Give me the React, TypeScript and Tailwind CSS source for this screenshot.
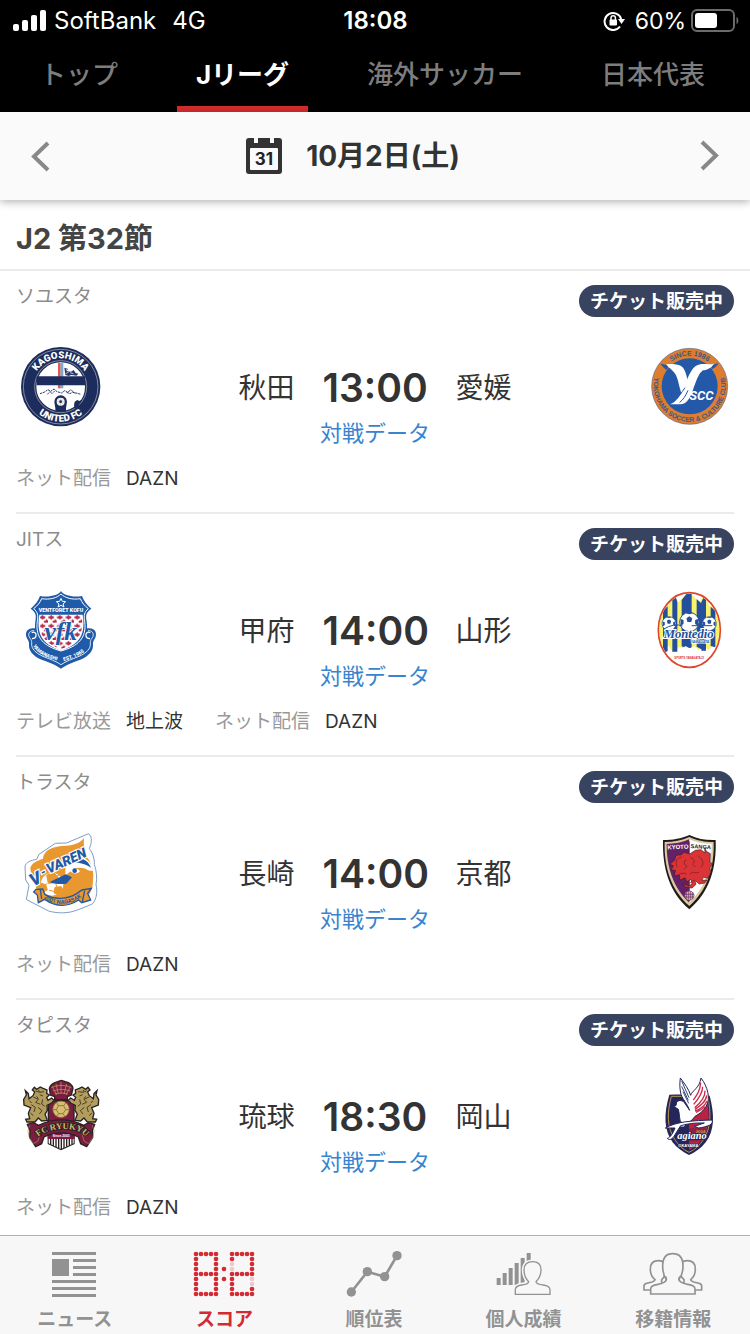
import type { ReactNode } from 'react'

type Match = {
  venue: string
  home: string
  away: string
  time: string
  homeLogo: ReactNode
  awayLogo: ReactNode
  media: { label: string; value: string }[]
}

const CREST = 'h-20 w-20 overflow-visible'
const LATIN = 'Liberation Sans, sans-serif'

function Kagoshima() {
  return (
    <svg viewBox="30 36 240 240" className={CREST} role="img" aria-label="秋田">
      <circle cx="152" cy="155" r="119" fill="#1c2c5c" />
      <circle cx="152" cy="155" r="112" fill="none" stroke="#b9b9b6" strokeWidth="2" />
      <circle cx="152" cy="155" r="75" fill="#fff" stroke="#1c2c5c" strokeWidth="4" />
      <circle cx="152" cy="155" r="78" fill="none" stroke="#b9b9b6" strokeWidth="2" />
      <path d="M144 84h8v76h-8z" fill="#df5a4c" />
      <path d="M152 84h8v76h-8z" fill="#79a9d8" />
      <path d="M163 98l12 4-6 6 14 2 8-5 6 9 8 2-5 6-16-2-8 3-10-3z" fill="#2c3b6b" />
      <path d="M168 103l8 4M180 113l10 3M167 116l9-5" stroke="#fff" strokeWidth="2" />
      <path d="M80 124h145v27H80z" fill="#1c2c5c" />
      <path d="M90 176l14-5 10-7 8 5 10-7 9 8 14 4 9-7 9 5 10-8 8 8 22 6M112 178l8-8 6 6 8-8M170 172l10 4 8-5 8 5" fill="none" stroke="#2c3b6b" strokeWidth="3" strokeDasharray="7 2" />
      <path d="M133 200a19 19 0 1 1 38 0l-3 20v10h-32v-10z" fill="#1c2c5c" />
      <circle cx="152" cy="200" r="12" fill="#f5f5f3" />
      <path d="M152 190v20M142 200h20M145 193l14 14M159 193l-14 14" stroke="#b9b9b6" strokeWidth="2" />
      <circle cx="152" cy="200" r="4" fill="#1c2c5c" />
      <path d="M194 200l8-5 6 3 7-4-9 19-11 10-3-12z" fill="#1c2c5c" />
      <path id="kagoshima-top" d="M67 155a85 85 0 0 1 170 0" fill="none" />
      <path id="kagoshima-bottom" d="M47 155a105 105 0 0 0 210 0" fill="none" />
      <g fill="#fff" fontFamily="Roboto, sans-serif" fontWeight="900" fontSize="29" textAnchor="middle">
        <text><textPath href="#kagoshima-top" startOffset="50%">KAGOSHIMA</textPath></text>
        <text><textPath href="#kagoshima-bottom" startOffset="50%">UNITED FC</textPath></text>
      </g>
    </svg>
  )
}

function Yscc() {
  return (
    <svg viewBox="30 36 240 240" className={CREST} role="img" aria-label="愛媛">
      <circle cx="149" cy="154" r="114" fill="#de7d2e" stroke="#5c6a8c" strokeWidth="2" />
      <circle cx="149" cy="154" r="84" fill="#2459a9" />
      <path d="M62 86l23 5-3 14c-9-4-15-10-20-19zM236 84l-23 7 2 12c9-4 16-10 21-19z" fill="#2459a9" />
      <path d="M78 88c18-2 38-2 49 8 11 11 14 34 20 56l-20 30c-9-20-11-45-19-61-6-13-17-18-30-33z" fill="#fff" />
      <path d="M222 86c-9 14-20 18-33 20-14 9-22 37-31 61-8 23-18 40-37 41H90c20-9 33-29 43-53 9-22 17-48 33-61 17-13 36-3 56-8z" fill="#fff" />
      <path d="M135 158c-10 14-22 34-35 43M144 166c-7 16-14 28-25 36" stroke="#2459a9" strokeWidth="3" fill="none" />
      <text x="148" y="196" fill="#fff" fontFamily="Roboto, sans-serif" fontWeight="700" fontStyle="italic" fontSize="39">SCC</text>
      <path id="yscc-top" d="M57 154a92 92 0 0 1 184 0" fill="none" />
      <path id="yscc-bottom" d="M61 90A108 108 0 1 0 237 90" fill="none" />
      <g fill="#39578c" fontFamily={LATIN} fontWeight="700" textAnchor="middle">
        <text fontSize="21"><textPath href="#yscc-top" startOffset="50%">SINCE 1986</textPath></text>
        <text fontSize="20"><textPath href="#yscc-bottom" startOffset="50%">YOKOHAMA SOCCER &amp; CULTURE CLUB</textPath></text>
      </g>
    </svg>
  )
}

function Kofu() {
  return (
    <svg viewBox="30 30 240 240" className={CREST} role="img" aria-label="甲府">
      <defs>
        <pattern id="kofu-check" x="88" y="102" width="26" height="26" patternUnits="userSpaceOnUse">
          <path d="M1 7h5l3-5 5 5h4v6h-4l-4 4-5-4H1zM14 20h4l4-5 4 5v6h-4l-4 3-4-3z" fill="#b5274b" />
        </pattern>
      </defs>
      <path d="M70 145c-17-1-25 11-21 25 3 10 9 11 8 24-1 15 9 33 38 45 24 9 40 14 58 27 18-13 34-18 58-27 29-12 39-30 38-45-1-13 5-14 8-24 4-14-4-26-21-25z" fill="#205ba9" />
      <path d="M72 152c-12-1-18 8-15 17 3 8 9 9 8 23-1 13 11 27 34 37 22 9 38 14 54 25 16-11 32-16 54-25 23-10 35-24 34-37-1-14 5-15 8-23 3-9-3-18-15-17" fill="none" stroke="#dbe6f2" strokeWidth="3" />
      <path d="M153 33c7 12 34 20 63 15 5 14 13 25 28 38-14 10-18 18-14 38 8 56-22 82-77 97-55-15-84-41-77-97 4-20 0-28-14-38 15-13 23-24 28-38 29 5 56-3 63-15z" fill="#205ba9" />
      <path d="M153 42c12 12 34 18 58 14 5 12 12 21 24 30-12 10-14 20-11 38 7 51-21 75-71 89-50-14-78-38-71-89 3-18 1-28-11-38 12-9 19-18 24-30 24 4 46-2 58-14z" fill="none" stroke="#fff" strokeWidth="3" />
      <path d="M88 104h130c9 57-7 88-65 108-58-20-74-51-65-108z" fill="#fff" />
      <path d="M91 104h124c7 54-7 84-62 103-55-19-69-49-62-103z" fill="url(#kofu-check)" />
      <path d="M153 55l4 9 10 1-8 7 3 9-9-5-9 5 3-9-8-7 10-1z" fill="#205ba9" stroke="#fff" strokeWidth="3" />
      <path d="M65 158c8-4 15 1 13 10-1 6-6 8-12 8M241 158c-8-4-15 1-13 10 1 6 6 8 12 8" fill="none" stroke="#fff" strokeWidth="4" />
      <text x="153" y="96" textAnchor="middle" fill="#fff" fontFamily="Roboto, sans-serif" fontWeight="900" fontSize="16">VENTFORET KOFU</text>
      <text x="152" y="179" textAnchor="middle" fill="#205ba9" stroke="#fff" strokeWidth="4" paintOrder="stroke" fontFamily="Liberation Serif, serif" fontStyle="italic" fontWeight="700" fontSize="76">vfk</text>
      <path id="kofu-left" d="M69 197c10 22 35 34 77 46" fill="none" />
      <path id="kofu-right" d="M161 243c41-12 62-23 75-42" fill="none" />
      <g fill="#fff" fontFamily="Roboto, sans-serif" fontWeight="900" fontSize="15">
        <text><textPath href="#kofu-left">YAMANASHI</textPath></text>
        <text><textPath href="#kofu-right">EST. 1965</textPath></text>
      </g>
    </svg>
  )
}

function Ball({ x, y, r }: { x: number; y: number; r: number }) {
  return (
    <g transform={`translate(${x} ${y}) scale(${r})`}>
      <circle r="1" fill="#fff" stroke="#234f9c" strokeWidth="0.1" />
      <path d="M-.3-.4L0-.6.3-.4.2 0h-.4zM-.9-.3l.3.1 0 .4-.3.2zM.9-.3l-.3.1 0 .4.3.2zM-.4-.9L0-.8.4-.9 0-1z" fill="#234f9c" />
    </g>
  )
}

function Yamagata() {
  return (
    <svg viewBox="30 30 240 240" className={CREST} role="img" aria-label="山形">
      <clipPath id="yamagata-oval"><ellipse cx="148" cy="150" rx="90" ry="109" /></clipPath>
      <ellipse cx="148" cy="150" rx="94" ry="113" fill="#fff" />
      <g clipPath="url(#yamagata-oval)">
        <path d="M58 105l14-18 14-13 15-32 14 26 14-17 17-17 17 17 15 17 14-26 14 32 16 13 18 18v102l-18-14-16 18-18-15-16 21-19-17-17 8-17-8-20 17-15-21-18 15-16-18-12 14z" fill="#f8f36b" />
        <path d="M69 92l14-13v134l-14 8zM97 51l7-10 8 24v150H97zM125 60l16-20h14v165h-14l-16-6zM170 57l14 13v138l-14-8zM184 66l12-24 2 10v160h-14zM212 80l14 12v110l-14-4z" fill="#234f9c" />
      </g>
      <ellipse cx="148" cy="150" rx="93" ry="112" fill="none" stroke="#dd482d" strokeWidth="5" />
      <Ball x={87} y={131} r={21} />
      <Ball x={208} y={131} r={21} />
      <Ball x={148} y={126} r={29} />
      <text x="146" y="174" textAnchor="middle" fill="#234f9c" stroke="#fff" strokeWidth="6" paintOrder="stroke" fontFamily="Liberation Serif, serif" fontStyle="italic" fontWeight="700" fontSize="38">Montedio</text>
      <path d="M70 148q32-20 58-10M155 137h62" fill="none" stroke="#234f9c" strokeWidth="3" />
      <text x="180" y="188" textAnchor="middle" fill="#234f9c" stroke="#fff" strokeWidth="3" paintOrder="stroke" fontFamily={LATIN} fontWeight="700" fontStyle="italic" fontSize="10">YAMAGATA</text>
      <path d="M102 225l20-13 14-14 13 7 14-7 16 16 18 11v16h-95z" fill="#fff" />
      <text x="148" y="238" textAnchor="middle" fill="#d62c2c" fontFamily={LATIN} fontWeight="700" fontSize="8">SPORTS YAMAGATA 21</text>
    </svg>
  )
}

function Nagasaki() {
  return (
    <svg viewBox="30 33 240 240" className={CREST} role="img" aria-label="長崎">
      <path d="M236 35c12 11 9 28 2 45 10 13 16 30 15 47 7 22 9 42 5 61 5 20 2 43-10 57-21 10-37 16-58 23-25 7-54 5-74-1l-47-24-20-11 8-42-10-16-2-41c4-14 18-18 35-21l7-15 49-33 33-1z" fill="#fff" stroke="#7c9dca" strokeWidth="3" />
      <path d="M222 48c-17 23-49 23-74 25-29 4-47 16-49 37-19 6-35 14-38 28 2 18 4 33 14 46 4 24 14 42 37 52 33 13 78 9 107-10 24-17 34-46 30-77-4-20-11-34-18-43-2-16-12-25-9-58z" fill="#e9982f" />
      <path d="M166 116c35-19 77-13 84 31l-33-4c-17 0-20 9-51 20z" fill="#fff" />
      <path d="M168 119c28-20 64-13 75 18-17-13-42-18-75-18z" fill="#2458a3" />
      <circle cx="126" cy="187" r="36" fill="#fff" stroke="#e9982f" strokeWidth="4" />
      <path d="M110 160l19-9 15 13-7 18-22 2zM91 183l16 5 5 15-15 9zM135 196l19-2 5 12-13 13-14-6zM137 165l15-8M112 184l-9 7M137 184l4 12M117 205l15 3" fill="#e9982f" stroke="#e9982f" strokeWidth="3" />
      <path d="M160 181l10-24 21-16c26-10 48 1 56 22 6 32-7 61-25 69 0-31-20-45-62-51z" fill="#e9982f" />
      <path d="M119 180l48-23 19 9-17 19c-18 2-34 2-50-5z" fill="#2458a3" />
      <path d="M181 148c8-10 22-10 29 0-9 9-20 9-29 0z" fill="#fff" />
      <circle cx="194" cy="146" r="7" fill="#2458a3" />
      <path d="M78 202l20-1 7 17c27 15 66 15 95-3l16-11 28-5-11 15 9 20-27 8-9-8c-34 22-70 20-102-2l-19 10-3-23-11-9z" fill="#e9982f" stroke="#2458a3" strokeWidth="4" />
      <path d="M91 202l4 29M224 206l-7 34" stroke="#2458a3" strokeWidth="4" />
      <path id="nagasaki-ribbon" d="M101 227c29 25 75 26 114-2" fill="none" />
      <text fill="#2458a3" fontFamily="Roboto, sans-serif" fontWeight="700" fontSize="17"><textPath href="#nagasaki-ribbon">2001 NAGASAKI</textPath></text>
      <g fill="#2458a3" stroke="#fff" strokeWidth="7" paintOrder="stroke" fontFamily="Roboto, sans-serif" fontStyle="italic" fontWeight="900">
        <text x="70" y="194" fontSize="52" transform="rotate(-28 70 194)">V</text>
        <text x="98" y="164" fontSize="36" transform="rotate(-28 98 164)">-</text>
        <text x="116" y="155" fontSize="41" transform="rotate(-24 116 155)">VAREN</text>
      </g>
    </svg>
  )
}

function Kyoto() {
  return (
    <svg viewBox="30 33 240 240" className={CREST} role="img" aria-label="京都">
      <path d="M148 39c25 12 50 16 79 15 3 84-18 157-79 208C87 211 67 138 69 54c30 0 55-4 79-15z" fill="#211b1c" />
      <path d="M148 45c23 11 46 15 73 15 2 77-18 144-73 192-55-48-76-115-74-192 28 0 51-5 74-15z" fill="#d9caa1" />
      <path d="M148 52v190C99 196 80 136 80 66c24 0 47-5 68-14z" fill="#632168" />
      <path d="M148 52c20 9 42 14 67 14 0 70-18 130-67 176z" fill="#fff" />
      <path d="M148 58v180" stroke="#241d20" strokeWidth="2" />
      <text x="114" y="81" textAnchor="middle" fill="#fff" fontFamily={LATIN} fontSize="18" fontWeight="700" transform="rotate(-3 114 81)">KYOTO</text>
      <text x="182" y="80" textAnchor="middle" fill="#2b2226" fontFamily={LATIN} fontSize="17" fontWeight="700" transform="rotate(3 182 80)">SANGA</text>
      <path d="M149 96l-16-5-10 7-15 2-4 14-15 13 11 4-7 13 13 1-3 17 15-4 2 17 15-8 5 13 13-8 3 14-10 6-18-8 9 12 19 2 12-11-4-12 14 11 16-3 7-9-15 1 4-9 14 3 9-19-4-12 8-12-7-7 1-24-12-7-5-11 1 16-12-10-17 2z" fill="#dc3337" stroke="#3a2023" strokeWidth="2" />
      <path d="M125 105c-17 3-20 18-14 30M119 154c9 3 16-5 20 4M140 111c-11 8-8 18 1 22l-8 9M151 107c14 3 14 13 7 20l8 8M173 101c15 9 21 26 10 35M177 151c-12 5-21-6-27 6M135 174l13 10 15-10" fill="none" stroke="#6b2023" strokeWidth="2" />
      <circle cx="148" cy="221" r="14" fill="#d9caa1" stroke="#632168" strokeWidth="2" />
      <path d="M139 212v18M145 209v24M151 209v24M157 212v18M135 217h26M135 225h26" stroke="#632168" strokeWidth="2" />
    </svg>
  )
}

function Shisa() {
  return (
    <g>
      <path d="M73 67l7 6 11-7 8 4 12 5-1 10 8 5-8 7 4 9 11-7 7 7-7 8-14 7 1 15-7 12 7 18-17 2-10-9-10 12H51l-4-8 12-2-4-16 7-17-20-8-1-17 8-13-3-13 9 9 2 15 12-9 5-11-7-6z" fill="#b29d5d" stroke="#27231f" strokeWidth="4" />
      <path d="M77 78l12 4 13-2M89 89l10 4M70 96l15 7-8 9 14 6M64 119l12 8-4 14M84 127l12 10-8 10M98 103l-3 14 9 7M61 144l9 8M86 75l2 5M80 94l5 7M58 108l7 5" fill="none" stroke="#4a4027" strokeWidth="3" />
    </g>
  )
}

function Ryukyu() {
  return (
    <svg viewBox="30 33 240 240" className={CREST} role="img" aria-label="琉球">
      <path d="M113 105h81v132l-41 19-40-19z" fill="#27231f" />
      <path d="M117 109h73v80h-73z" fill="#7d1c42" />
      <path d="M116 220h75v15l-38 17-37-17z" fill="#fff" />
      <path d="M122 220v19M130 220v22M138 220v26M146 220v30M154 220v32M162 220v29M170 220v25M178 220v22M186 220v18" stroke="#27231f" strokeWidth="4" />
      <path d="M118 70c3-12 14-17 25-20l11-4 12 4c12 3 21 9 23 20l-5 20-12 5v9h-38v-9l-13-5z" fill="#7d1c42" stroke="#27231f" strokeWidth="4" />
      <path d="M124 68c20-9 40-9 60 0M129 78c17-6 34-6 51 0M135 87c11-4 25-4 38 0M138 57l7 30M153 50v36M170 57l-8 30M127 64l13 26M181 65l-13 25" fill="none" stroke="#c2a660" strokeWidth="2" />
      <Shisa />
      <g transform="matrix(-1 0 0 1 307 0)"><Shisa /></g>
      <circle cx="153" cy="133" r="25" fill="#d6bd72" stroke="#6f5929" strokeWidth="2" />
      <path d="M145 122h16l6 12-8 12h-13l-7-12zM145 122l-5-9M161 122l6-8M167 134h11M159 146l6 9M146 146l-6 8M139 134h-10" fill="none" stroke="#6f5929" strokeWidth="2" />
      <path d="M113 186h81v36h-81z" fill="#7d1c42" />
      <path d="M52 178l18-5 16 8c41-22 95-22 135 0l15-8 18 5-7 19 1 21-18 27-18-9-7-20c-34-16-70-16-103 0l-7 20-18 9-18-27 1-21z" fill="#7d1c42" stroke="#27231f" strokeWidth="4" />
      <path d="M59 181l-5 16 3 19 14 20 13-8 6-22M247 181l5 16-3 19-14 20-13-8-6-22" fill="none" stroke="#b58c59" strokeWidth="2" />
      <path id="ryukyu-name" d="M80 222c13-32 132-48 151 1" fill="none" />
      <text fill="#d6bd72" stroke="#27231f" strokeWidth="6" paintOrder="stroke" fontFamily="Liberation Serif, serif" fontWeight="700" fontSize="26" textAnchor="middle"><textPath href="#ryukyu-name" startOffset="50%">FC RYUKYU</textPath></text>
      <text x="153" y="215" fill="#fff" textAnchor="middle" fontFamily={LATIN} fontWeight="700" fontSize="10">Since.2003</text>
    </svg>
  )
}

function Okayama() {
  return (
    <svg viewBox="33 33 240 240" className={CREST} role="img" aria-label="岡山">
      <path d="M91 89c39-1 84-1 121 3 15 58 15 103-12 140-14 18-31 30-50 38-19-9-36-21-49-38-27-37-27-85-10-143z" fill="#242659" />
      <path d="M97 94h109c11 51 10 94-12 129-12 18-26 31-44 39-18-8-31-21-43-39-24-37-23-80-10-129z" fill="none" stroke="#bb944c" strokeWidth="3" />
      <path d="M150 98h53c10 50 9 91-13 125-10 15-23 26-40 32z" fill="#b82342" />
      <path d="M150 190h53l-5 14h-48zM150 215h42l-9 14h-33z" fill="#8c2045" />
      <path d="M152 136c-9-23-20-31-26-48-3-12-5-29-2-49 11 15 26 34 31 52 4-15 26-20 31-52 20 26 29 61 16 84-9 16-23 25-34 31-8 12-17 18-26 21l-6 11h-13l5-12c-9-9-5-26-10-41l-14-9 7-2 2-12 10-4 10 3 6 8z" fill="#fff" stroke="#242659" strokeWidth="3" />
      <path d="M128 48l22 50M128 64l20 42M132 80l17 35" stroke="#374579" strokeWidth="3" />
      <path d="M185 53c-2 25-11 37-22 52M191 65c0 19-14 38-27 53M198 77c1 21-18 40-31 51M203 91c-2 20-20 32-35 42M204 108c-6 14-19 24-36 30M198 125c-8 9-16 13-27 17" fill="none" stroke="#cc294a" strokeWidth="4" />
      <path d="M79 189c35-20 83-22 140-24 6 14-14 20-40 24l-13-5 30-10c-29-1-49 2-71 8l-17 27c-8 15-18 18-23 11 9-2 18-17 23-31z" fill="#fff" stroke="#242659" strokeWidth="3" />
      <text x="170" y="203" fill="#c19b4f" fontFamily={LATIN} fontWeight="700" fontSize="13">2004</text>
      <text x="115" y="223" fill="#fff" stroke="#242659" strokeWidth="5" paintOrder="stroke" fontFamily="Liberation Serif, serif" fontStyle="italic" fontWeight="700" fontSize="31">agiano</text>
      <text x="148" y="245" textAnchor="middle" fill="#fff" stroke="#242659" strokeWidth="2" paintOrder="stroke" fontFamily={LATIN} fontWeight="700" fontSize="12">OKAYAMA</text>
    </svg>
  )
}

const dazn = { label: 'ネット配信', value: 'DAZN' }

const matches: Match[] = [
  { venue: 'ソユスタ', home: '秋田', away: '愛媛', time: '13:00', homeLogo: <Kagoshima />, awayLogo: <Yscc />, media: [dazn] },
  { venue: 'JITス', home: '甲府', away: '山形', time: '14:00', homeLogo: <Kofu />, awayLogo: <Yamagata />, media: [{ label: 'テレビ放送', value: '地上波' }, dazn] },
  { venue: 'トラスタ', home: '長崎', away: '京都', time: '14:00', homeLogo: <Nagasaki />, awayLogo: <Kyoto />, media: [dazn] },
  { venue: 'タピスタ', home: '琉球', away: '岡山', time: '18:30', homeLogo: <Ryukyu />, awayLogo: <Okayama />, media: [dazn] },
]

function MatchRow({ match }: { match: Match }) {
  return (
    <li className="mx-4 flex h-[243px] flex-col border-b-2 border-[#ebebeb]">
      <div className="flex items-start justify-between pt-[14px]">
        <span className="text-[19px] leading-6 text-[#8c8c8c]">{match.venue}</span>
        <button className="h-8 rounded-full bg-[#38435f] px-[11px] text-[19px] leading-[34px] font-bold text-white">チケット販売中</button>
      </div>
      <div className="mt-[30px] flex items-start justify-between px-1">
        {match.homeLogo}
        <div className="flex flex-col items-center pt-4">
          <div className="flex items-center gap-7 leading-[50px] text-[#333]">
            <span className="text-[28px]">{match.home}</span>
            <span className="w-[105px] text-center text-[39px] leading-12 font-semibold">{match.time}</span>
            <span className="text-[28px]">{match.away}</span>
          </div>
          <a href="#" className="text-[22px] leading-10 text-[#3784cf]">対戦データ</a>
        </div>
        {match.awayLogo}
      </div>
      <dl className="mt-[14px] flex gap-8 text-[19px] leading-6">
        {match.media.map((m) => (
          <div key={m.label} className="flex gap-[15px]">
            <dt className="text-[#999]">{m.label}</dt>
            <dd className="text-[#333]">{m.value}</dd>
          </div>
        ))}
      </dl>
    </li>
  )
}

function StatusBar() {
  return (
    <div className="grid h-10 grid-cols-3 items-center pr-[11px] pl-3 text-[24px] leading-[42px]">
      <div className="flex items-center gap-2">
        <svg width="34" height="22" viewBox="0 0 34 22" fill="white">
          <rect x="1" y="14" width="6" height="7" rx="2" />
          <rect x="10" y="10" width="6" height="11" rx="2" />
          <rect x="19" y="5" width="6" height="16" rx="2" />
          <rect x="28" y="0" width="6" height="21" rx="2" />
        </svg>
        <span>SoftBank</span>
        <span className="ml-2">4G</span>
      </div>
      <span className="text-center font-semibold">18:08</span>
      <div className="flex items-center justify-end">
        <svg width="22" height="20" viewBox="0 0 22 20" fill="none" className="mr-[10px]">
          <path d="M17 15.500A8.500 8.500 0 1 1 18.200 8" stroke="white" strokeWidth="2" />
          <path d="M15 8h7l-3.500 5z" fill="white" />
          <path d="M8 9V7a2.200 2.200 0 0 1 4.400 0v2" stroke="white" strokeWidth="1.500" />
          <rect x="6.500" y="8.500" width="7.500" height="6" rx="1" fill="white" />
        </svg>
        <span className="text-[23px]">60%</span>
        <svg width="48" height="24" viewBox="0 0 48 24" fill="none" className="ml-[5px]">
          <rect x="1" y="1" width="42" height="21" rx="5" stroke="#6b6b6b" strokeWidth="2" />
          <rect x="4" y="4" width="22" height="15" rx="3" fill="white" />
          <path d="M45.500 8c2.500 1 2.500 6 0 7z" fill="#6b6b6b" />
        </svg>
      </div>
    </div>
  )
}

const tabs = ['トップ', 'Jリーグ', '海外サッカー', '日本代表']

function Chevron({ flip }: { flip?: boolean }) {
  return (
    <svg width="20" height="32" viewBox="0 0 20 32" fill="none" className={flip ? 'rotate-180' : ''}>
      <path d="M18 3L4 16.500 18 30" stroke="#888" strokeWidth="4" />
    </svg>
  )
}

function NewsIcon() {
  return (
    <svg width="60" height="45" viewBox="135 66 180 135" fill="#929292">
      <path d="M156 66h132v9H156zM156 87h51v51h-51zM219 87h69v9h-69zM219 108h69v9h-69zM219 129h69v9h-69zM156 150h132v9H156zM156 171h132v9H156zM156 192h132v9H156z" />
    </svg>
  )
}

// Two digits on an LED board: 5 x 9 dots each
function ScoreIcon() {
  const dots: { x: number; y: number; off: boolean }[] = []
  for (const left of [588, 696]) {
    for (let row = 0; row < 9; row++) {
      for (let col = 0; col < 5; col++) {
        if (row % 4 !== 0 && col !== 0 && col !== 4) continue
        const off = left === 696 && ((col === 0 && (row === 2 || row === 3)) || (col === 4 && row >= 5 && row <= 6))
        dots.push({ x: left + col * 15, y: 72 + row * 15, off })
      }
    }
  }
  return (
    <svg width="60" height="45" viewBox="582 66 180 135" className="overflow-visible">
      {dots.map((d) => (
        <circle key={`${d.x}-${d.y}`} cx={d.x} cy={d.y} r="7" fill={d.off ? '#efc8cd' : '#d42b33'} />
      ))}
      <circle cx="672" cy="117" r="7" fill="#d42b33" />
      <circle cx="672" cy="147" r="7" fill="#d42b33" />
    </svg>
  )
}

function RankingIcon() {
  return (
    <svg width="60" height="45" viewBox="1033 66 180 135" fill="#929292" className="overflow-visible">
      <path d="M1055 186l48-61 52 15 37-63" fill="none" stroke="#929292" strokeWidth="8" />
      <circle cx="1055" cy="186" r="14" />
      <circle cx="1103" cy="125" r="14" />
      <circle cx="1155" cy="140" r="14" />
      <circle cx="1192" cy="77" r="14" />
    </svg>
  )
}

function StatsIcon() {
  return (
    <svg width="60" height="45" viewBox="358 66 180 135" fill="none" stroke="#929292" strokeWidth="4">
      <path d="M366 144h12v21h-12zM384 129h12v36h-12zM402 114h12v51h-12zM420 99h12v66h-12zM438 84h12v81h-12zM456 69h12v50h-12z" fill="#929292" stroke="none" />
      <path d="M422 193v-15c0-9 7-11 19-13 14-2 21-5 21-10-10-10-14-22-14-35 0-16 10-25 26-25s26 9 26 25c0 13-5 25-15 35 0 6 7 8 22 10 13 2 20 5 20 14v14z" fill="#f7f7f7" stroke="#f7f7f7" strokeWidth="13" />
      <path d="M422 193v-15c0-9 7-11 19-13 14-2 21-5 21-10-10-10-14-22-14-35 0-16 10-25 26-25s25 9 25 25c0 13-5 25-15 35 0 6 7 8 22 10 13 2 20 5 20 14v14z" fill="#f7f7f7" />
    </svg>
  )
}

function TransferIcon() {
  return (
    <svg width="60" height="45" viewBox="808 66 180 135" fill="#f7f7f7" stroke="#929292" strokeWidth="5">
      <path d="M811 180v-12c0-7 6-8 16-10 12-2 16-4 17-9-10-8-14-20-14-32 0-16 9-25 24-25s24 9 24 25c0 12-5 24-14 32v31zM984 180v-12c0-7-6-8-16-10-12-2-16-4-17-9 10-8 14-20 14-32 0-16-9-25-24-25s-24 9-24 25c0 12 5 24 14 32v31z" />
      <path d="M831 192v-15c0-9 7-11 22-14 16-3 25-7 25-15-8-10-11-25-11-40 0-23 10-37 30-37s31 14 31 37c0 15-4 30-12 40 0 8 9 12 26 15 15 3 22 5 22 14v15z" />
      <path d="M870 140c9-1 10 7 6 12M924 140c-9-1-10 7-6 12" fill="none" />
    </svg>
  )
}

const navItems = [
  { label: 'ニュース', icon: <NewsIcon /> },
  { label: 'スコア', icon: <ScoreIcon />, active: true },
  { label: '順位表', icon: <RankingIcon /> },
  { label: '個人成績', icon: <StatsIcon /> },
  { label: '移籍情報', icon: <TransferIcon /> },
]

export default function App() {
  return (
    <div className="flex h-screen flex-col bg-white font-[Inter,'Noto_Sans_CJK_JP',sans-serif]">
      <header className="shrink-0 bg-black text-white">
        <StatusBar />
        <nav className="flex h-[72px] justify-between pr-[26px] pl-[21px] text-[26px] font-medium">
          {tabs.map((tab) => (
            <a
              key={tab}
              href="#"
              className={`flex items-center border-b-[6px] px-[19px] pt-0.5 ${tab === 'Jリーグ' ? 'border-[#d32c2c] font-bold text-white' : 'border-transparent text-[#7d7d7d]'}`}
            >
              {tab}
            </a>
          ))}
        </nav>
      </header>

      {/* Date switcher */}
      <div className="relative z-10 flex h-[88px] shrink-0 items-center justify-between bg-[#fafafa] px-[30px] shadow-[0_2px_8px_rgba(0,0,0,0.3)]">
        <button aria-label="前の日"><Chevron /></button>
        <button className="flex items-center gap-6 pr-11 text-[28px] font-bold text-[#333]">
          <svg width="36" height="36" viewBox="0 0 36 36">
            <path d="M3 0h5v5h4V0h12v5h4V0h5a3 3 0 0 1 3 3v30a3 3 0 0 1-3 3H3a3 3 0 0 1-3-3V3a3 3 0 0 1 3-3z" fill="#333" />
            <rect x="4" y="10" width="28" height="22" rx="1" fill="#fafafa" />
            <text x="18" y="27" textAnchor="middle" fontSize="17" fontWeight="700" fill="#222">31</text>
          </svg>
          <span>10月2日(土)</span>
        </button>
        <button aria-label="次の日"><Chevron flip /></button>
      </div>

      <main className="min-h-0 flex-1 overflow-y-auto [scrollbar-width:none]">
        <h1 className="h-[71px] border-b-2 border-[#ebebeb] px-4 pt-[21px] text-[29px] leading-9 font-bold text-[#444]">J2 第32節</h1>
        <ul>
          {matches.map((m) => (
            <MatchRow key={m.venue} match={m} />
          ))}
        </ul>
      </main>

      <nav className="grid h-[99px] shrink-0 grid-cols-5 border-t border-[#b0b0b0] bg-[#f7f7f7] pr-0.5">
        {navItems.map((item) => (
          <a
            key={item.label}
            href="#"
            className={`flex flex-col items-center gap-[9px] pt-4 text-[19px] leading-7 font-bold ${item.active ? 'text-[#d42b33]' : 'text-[#929292]'}`}
          >
            {item.icon}
            {item.label}
          </a>
        ))}
      </nav>
    </div>
  )
}
